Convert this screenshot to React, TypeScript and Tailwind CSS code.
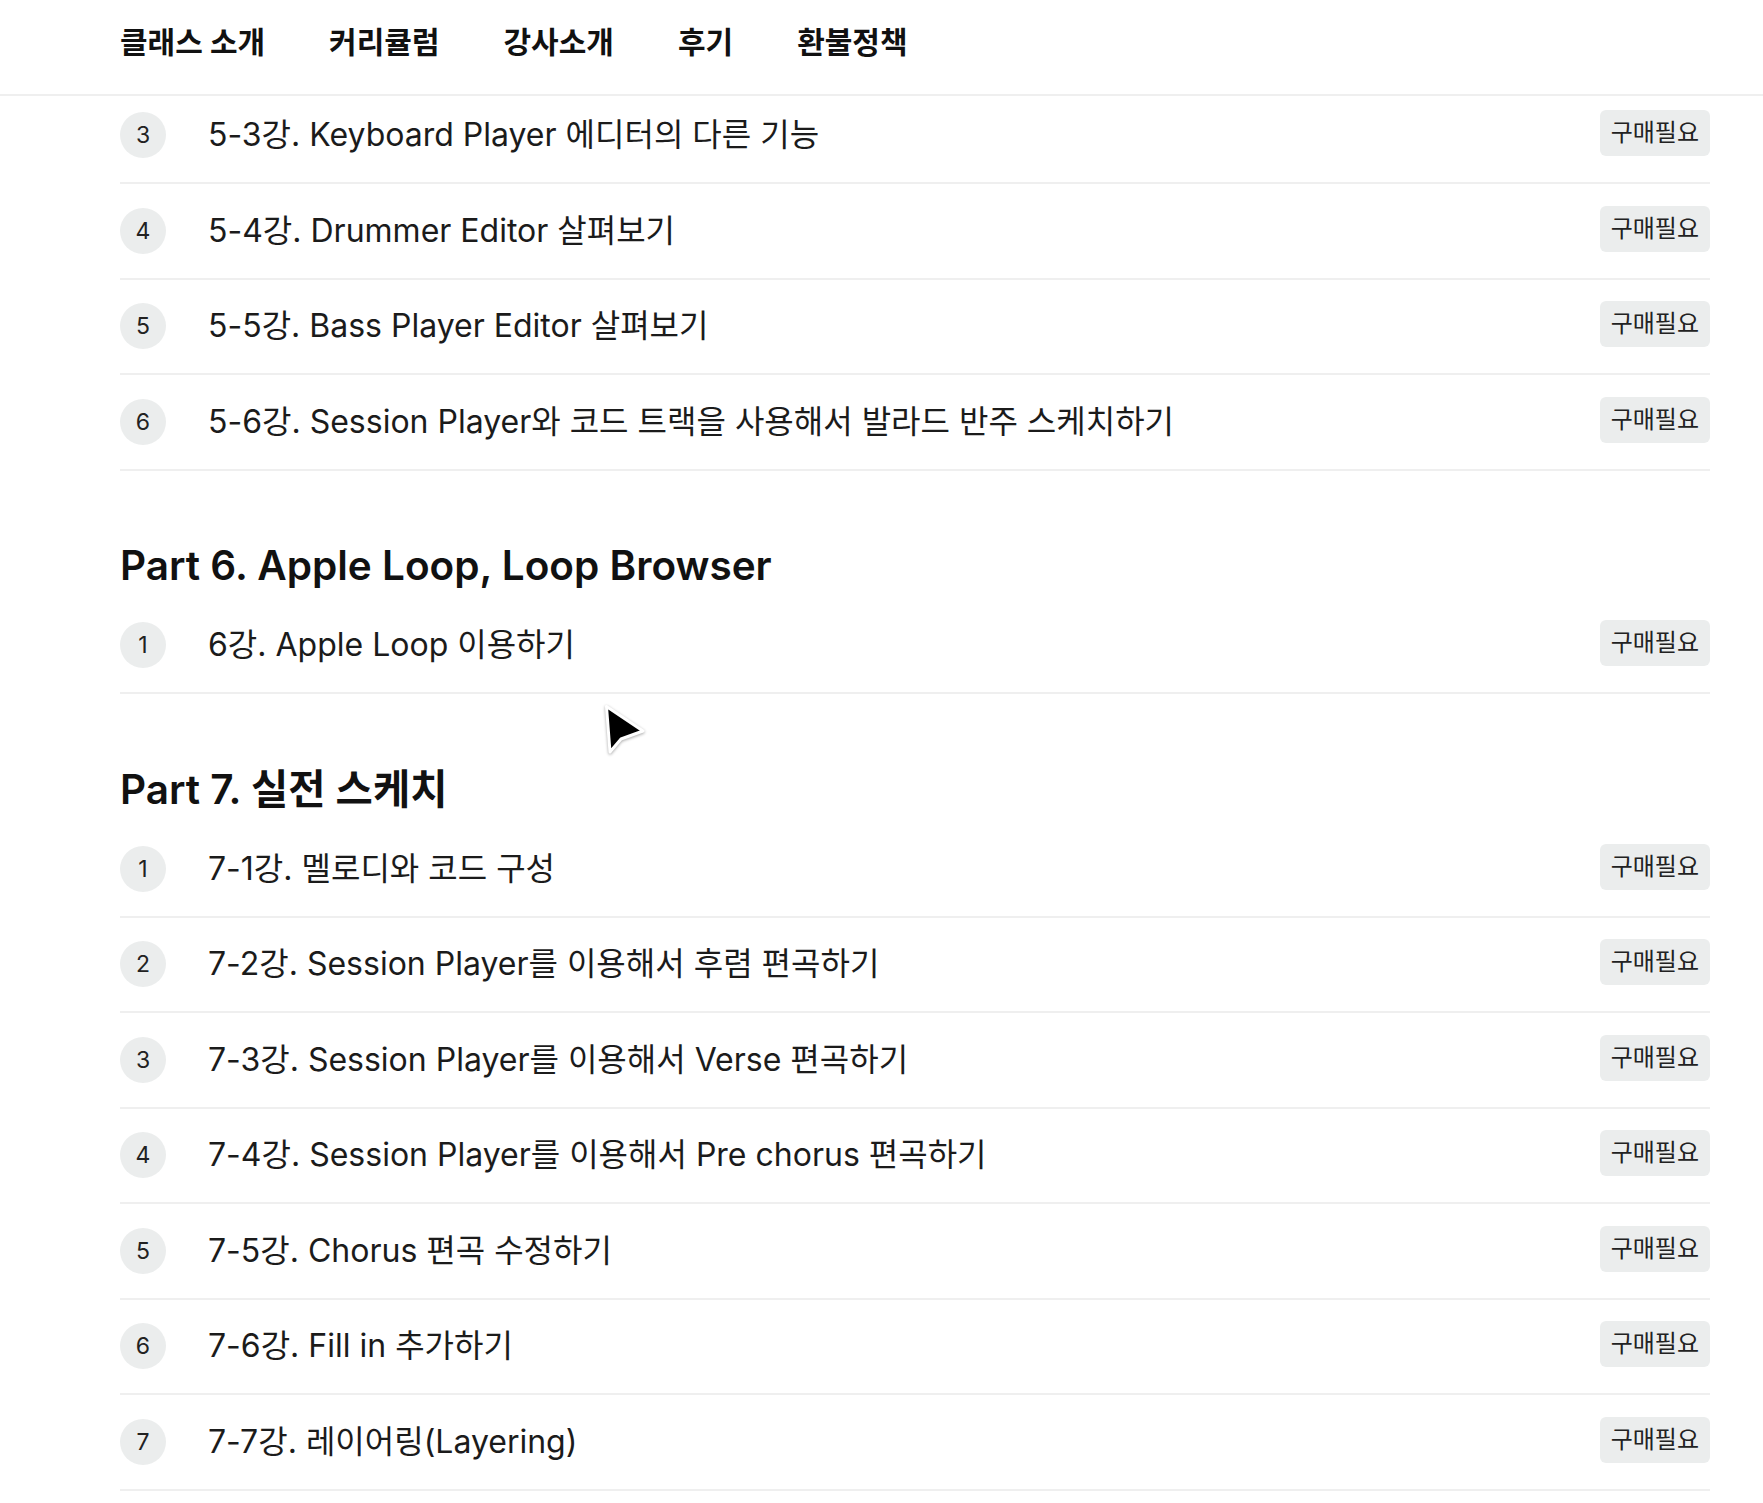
const navItems = ['클래스 소개', '커리큘럼', '강사소개', '후기', '환불정책']

const part5 = [
  { n: 3, title: '5-3강. Keyboard Player 에디터의 다른 기능' },
  { n: 4, title: '5-4강. Drummer Editor 살펴보기' },
  { n: 5, title: '5-5강. Bass Player Editor 살펴보기' },
  { n: 6, title: '5-6강. Session Player와 코드 트랙을 사용해서 발라드 반주 스케치하기' },
]

const part6 = [{ n: 1, title: '6강. Apple Loop 이용하기' }]

const part7 = [
  { n: 1, title: '7-1강. 멜로디와 코드 구성' },
  { n: 2, title: '7-2강. Session Player를 이용해서 후렴 편곡하기' },
  { n: 3, title: '7-3강. Session Player를 이용해서 Verse 편곡하기' },
  { n: 4, title: '7-4강. Session Player를 이용해서 Pre chorus 편곡하기' },
  { n: 5, title: '7-5강. Chorus 편곡 수정하기' },
  { n: 6, title: '7-6강. Fill in 추가하기' },
  { n: 7, title: '7-7강. 레이어링(Layering)' },
]

function Row({ n, title }: { n: number; title: string }) {
  return (
    <div className="flex h-[95.5px] items-center border-b-2 border-[#efefef]">
      <div className="flex h-[46px] w-[46px] shrink-0 items-center justify-center rounded-full bg-[#ebeded] text-[23px] text-[#222]">
        {n}
      </div>
      <div className="ml-[42px] flex-1 text-[32px] text-[#1b1b1b]">{title}</div>
      <div className="-mt-[4px] flex h-[46px] items-center rounded-md bg-[#ebeded] px-[11px] text-[24px] text-[#222]">
        구매필요
      </div>
    </div>
  )
}

function Section({ title, rows }: { title: string; rows: { n: number; title: string }[] }) {
  return (
    <div className="mt-[72px]">
      <h2 className="mb-[8px] flex h-[48px] items-center text-[40.5px] font-semibold text-[#111]">{title}</h2>
      {rows.map((r) => (
        <Row key={r.n} {...r} />
      ))}
    </div>
  )
}

function Cursor() {
  return (
    <svg className="absolute left-[600px] top-[699px]" width="52" height="62" viewBox="0 0 52 62">
      <path
        d="M6.5 7.5 L43 32 L21 40 L10 53 Z"
        fill="#000"
        stroke="#fff"
        strokeWidth="3"
        strokeLinejoin="round"
        style={{ filter: 'drop-shadow(0 1px 1.5px rgba(0,0,0,0.35))' }}
      />
    </svg>
  )
}

export default function App() {
  return (
    <div className="relative h-[1503px] overflow-hidden bg-white font-[Inter,'Noto_Sans_CJK_KR',sans-serif]">
      <nav className="relative z-10 flex h-[96px] items-center gap-[64px] border-b-2 border-[#efefef] bg-white pb-[10px] pl-[120px] text-[30px] font-bold text-[#111]">
        {navItems.map((item) => (
          <span key={item}>{item}</span>
        ))}
      </nav>
      <main className="-mt-[7.5px] w-[1710px] pl-[120px]">
        {part5.map((r) => (
          <Row key={r.n} {...r} />
        ))}
        <Section title="Part 6. Apple Loop, Loop Browser" rows={part6} />
        <Section title="Part 7. 실전 스케치" rows={part7} />
      </main>
      <Cursor />
    </div>
  )
}
